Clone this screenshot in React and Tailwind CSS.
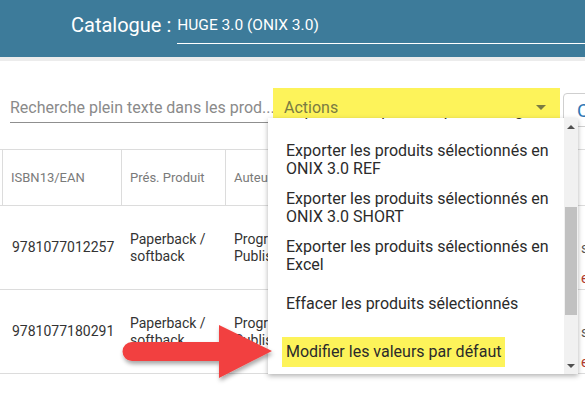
import React from "react";

const rows = [
  { isbn: "9781077012257", pres: "Paperback / softback", auteur: "Progressive Publishing" },
  { isbn: "9781077180291", pres: "Paperback / softback", auteur: "Progressive Publishing Smith" },
];

const menuItems = [
  { label: "Importer des produits par catalogue", lines: 1 },
  { label: "Exporter les produits sélectionnés en ONIX 3.0 REF" },
  { label: "Exporter les produits sélectionnés en ONIX 3.0 SHORT" },
  { label: "Exporter les produits sélectionnés en Excel" },
  { label: "Effacer les produits sélectionnés" },
];

const Arrow = () => (
  <svg className="absolute left-[110px] top-[318px]" width="175" height="72" viewBox="110 318 175 72">
    <defs>
      <filter id="sh" x="-20%" y="-20%" width="140%" height="160%">
        <feDropShadow dx="1" dy="3" stdDeviation="2" floodColor="#000" floodOpacity="0.35" />
      </filter>
    </defs>
    <path
      d="M132 342 L219 342 L219 325 L272 351 L219 378 L219 361 L132 361 A9.5 9.5 0 0 1 132 342 Z"
      fill="#f2413f"
      filter="url(#sh)"
    />
  </svg>
);

const App = () => {
  return (
    <div className="relative w-[585px] h-[398px] overflow-hidden bg-white font-['Roboto',sans-serif]">
      {/* top bar */}
      <div className="h-[57px] bg-[#3d7b9a] flex items-start pl-[71px] pt-[12px]">
        <span className="text-white text-[20px] leading-[26px]">Catalogue :</span>
        <div className="ml-[6px] flex-1 border-b border-white pb-[6px] pt-[1px]">
          <span className="text-white text-[15.5px] leading-[20px]">HUGE 3.0 (ONIX 3.0)</span>
        </div>
      </div>
      <div className="h-[4px] bg-[#ececec]" />

      {/* toolbar */}
      <div className="flex items-start mt-[27px]">
        <div className="shrink-0 ml-[10px] w-[263px] h-[35px] border-b border-[#8f8f8f] flex items-start pt-[10px]">
          <span className="text-[16px] text-[#8a8a8a] leading-[20px] whitespace-nowrap">
            Recherche plein texte dans les prod...
          </span>
        </div>
        <div className="shrink-0 w-[287px] h-[30px] bg-[#fdf35a] flex items-end justify-between pl-[11px] pr-[14px]">
          <span className="text-[16px] leading-[20px] text-[#7a7b42]">Actions</span>
          <span className="mb-[8px] w-0 h-0 border-l-[5px] border-r-[5px] border-t-[5px] border-l-transparent border-r-transparent border-t-[#7a7b42]" />
        </div>
        <div className="shrink-0 ml-[3px] mt-[5px] w-[40px] h-[34px] border border-[#cfcfcf] rounded-[4px] pl-[13px] pt-[3px]">
          <span className="text-[19px] text-[#2f78b5]">C</span>
        </div>
      </div>

      {/* table */}
      <div className="mt-[22px] border-t border-[#dcdcdc]">
        <div className="flex h-[56px] border-b border-[#dcdcdc] text-[13px] text-[#7a7a7a]">
          <div className="w-[3px] border-r border-[#dcdcdc]" />
          <div className="w-[119px] border-r border-[#dcdcdc] flex items-center pl-[8px]">ISBN13/EAN</div>
          <div className="w-[104px] border-r border-[#dcdcdc] flex items-center pl-[8px]">Prés. Produit</div>
          <div className="w-[120px] border-r border-[#dcdcdc] flex items-center pl-[8px]">Auteur</div>
          <div className="flex-1" />
        </div>
        {rows.map((r) => (
          <div key={r.isbn} className="flex h-[84px] border-b border-[#dcdcdc] text-[14px] text-[#333] leading-[17px]">
            <div className="w-[122px] flex items-center pl-[12px]">{r.isbn}</div>
            <div className="w-[104px] flex items-center pl-[8px] pr-[10px]">{r.pres}</div>
            <div className="w-[120px] flex items-center pl-[8px]">{r.auteur}</div>
            <div className="flex-1" />
            <div className="w-[4px] flex flex-col pt-[34px] overflow-hidden text-[#555]">
              <span>s</span>
              <span className="mt-[13px] text-[#b03a2e]">e</span>
            </div>
          </div>
        ))}
      </div>

      {/* dropdown menu */}
      <div className="absolute left-[268px] top-[118px] w-[310px] h-[256px] bg-white shadow-[0_2px_5px_rgba(0,0,0,0.3)] flex overflow-hidden">
        <div className="flex-1 overflow-hidden">
          <div className="mt-[-31px] text-[16px] text-[#2b2b2b] leading-[18px]">
            {menuItems.map((m, i) => (
              <div
                key={m.label}
                className={`min-h-[48px] flex items-center pl-[18px] pr-[10px] py-[6px] ${i === 0 ? "mb-[1px]" : ""}`}
              >
                <span className={m.lines === 1 ? "whitespace-nowrap" : ""}>{m.label}</span>
              </div>
            ))}
            <div className="min-h-[48px] flex items-center pl-[14px]">
              <span className="bg-[#fdf35a] px-[4px] h-[30px] flex items-center">Modifier les valeurs par défaut</span>
            </div>
          </div>
        </div>
        <div className="w-[14px] bg-[#f1f1f1] flex flex-col items-center">
          <div className="h-[18px] flex items-center justify-center">
            <span className="w-0 h-0 border-l-[4px] border-r-[4px] border-b-[4px] border-l-transparent border-r-transparent border-b-[#505050]" />
          </div>
          <div className="mt-[71px] w-[12px] h-[108px] bg-[#c1c1c1]" />
          <div className="flex-1" />
          <div className="h-[16px] flex items-center justify-center">
            <span className="w-0 h-0 border-l-[4px] border-r-[4px] border-t-[4px] border-l-transparent border-r-transparent border-t-[#505050]" />
          </div>
        </div>
      </div>

      <Arrow />
    </div>
  );
};

export default App;
